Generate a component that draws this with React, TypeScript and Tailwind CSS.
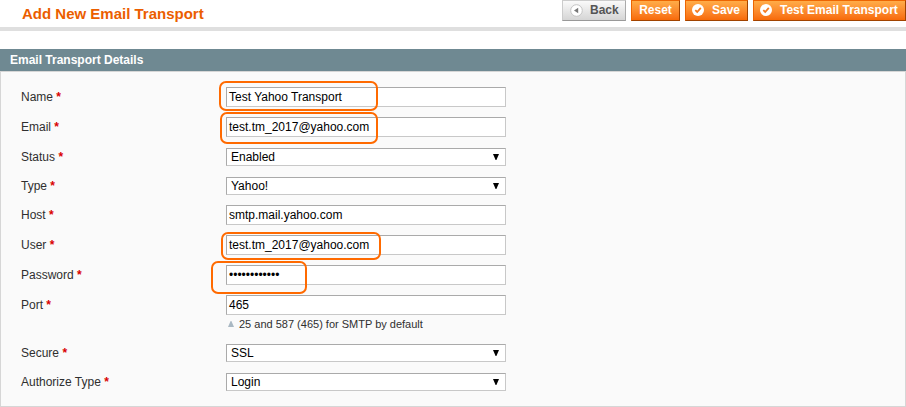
import React from 'react';

type Field = {
  label: string;
  value: string;
  kind: 'text' | 'select';
  row: string;
  highlight?: string;
  note?: string;
};

const fields: Field[] = [
  { label: 'Name', value: 'Test Yahoo Transport', kind: 'text', row: 'h-[30px]', highlight: '-left-[7px] -top-[6px] w-[159px] h-[30px]' },
  { label: 'Email', value: 'test.tm_2017@yahoo.com', kind: 'text', row: 'h-[30px]', highlight: '-left-[6px] -top-[5px] w-[158px] h-[32px]' },
  { label: 'Status', value: 'Enabled', kind: 'select', row: 'h-[29px]' },
  { label: 'Type', value: 'Yahoo!', kind: 'select', row: 'h-[29px]' },
  { label: 'Host', value: 'smtp.mail.yahoo.com', kind: 'text', row: 'h-[30px]' },
  { label: 'User', value: 'test.tm_2017@yahoo.com', kind: 'text', row: 'h-[30px]', highlight: '-left-[5px] -top-[3px] w-[160px] h-[28px]' },
  { label: 'Password', value: '••••••••••••', kind: 'text', row: 'h-[30px]', highlight: '-left-[15px] -top-[4px] w-[96px] h-[33px]' },
  { label: 'Port', value: '465', kind: 'text', row: 'h-12', note: '25 and 587 (465) for SMTP by default' },
  { label: 'Secure', value: 'SSL', kind: 'select', row: 'h-[29px]' },
  { label: 'Authorize Type', value: 'Login', kind: 'select', row: 'h-[29px]' },
];

const orange =
  'h-[21px] border border-t-[#ed6502] border-l-[#ed6502] border-r-[#a04300] border-b-[#a04300] bg-linear-to-b from-[#ffac47] to-[#f76a07] text-white';

function CheckIcon() {
  return (
    <svg width="12" height="12" viewBox="0 0 12 12" className="mb-px shrink-0">
      <circle cx="6" cy="6" r="6" fill="#fff" />
      <path d="M3.3 6.2 5.2 8 8.8 3.9" fill="none" stroke="#f47a20" strokeWidth="1.8" />
    </svg>
  );
}

function FieldRow({ label, value, kind, row, highlight, note }: Field) {
  return (
    <div className={`flex items-start ${row}`}>
      <div className="w-[205px] text-xs leading-5 text-[#2f2f2f]">
        {label} <span className="font-bold text-[#d90000]">*</span>
      </div>
      <div className="relative w-[280px]">
        {kind === 'text' ? (
          <div className="flex h-5 items-center border border-t-[#aaa] border-l-[#aaa] border-r-[#c8c8c8] border-b-[#c8c8c8] bg-white pl-0.5 text-xs text-black">
            {value}
          </div>
        ) : (
          <div className="mt-px flex h-[18px] items-center justify-between border border-t-[#aaa] border-l-[#aaa] border-r-[#c8c8c8] border-b-[#c8c8c8] bg-white pl-1 pr-1.5 text-xs text-black">
            {value}
            <svg width="6" height="6" viewBox="0 0 6 6" className="mb-px">
              <path d="M0 0h6L3.4 6h-.8z" fill="#000" />
            </svg>
          </div>
        )}
        {note && (
          <div className="flex h-[18px] items-center pl-0.5 text-[11px] text-[#2f2f2f]">
            <svg width="6" height="6" viewBox="0 0 6 6" className="mr-[5px]">
              <path d="M2.6 0h.8L6 6H0z" fill="#a9b8c3" />
            </svg>
            {note}
          </div>
        )}
        {highlight && (
          <div className={`absolute z-10 rounded-[7px] border-2 border-[#ff6a00] ${highlight}`} />
        )}
      </div>
    </div>
  );
}

export default function App() {
  return (
    <div className="h-[407px] w-[906px] overflow-hidden bg-white font-['Liberation_Sans',Arial,sans-serif]">
      <header className="flex h-[31px] items-start justify-between border-b-4 border-[#dfdfdf] pl-[22px]">
        <h1 className="pt-1 text-[15px] leading-5 font-bold text-[#eb5e00]">Add New Email Transport</h1>
        <div className="flex gap-[5px] text-xs leading-[19px] font-bold whitespace-nowrap">
          <button className="flex h-[21px] w-16 items-center border border-t-[#ccc] border-l-[#ccc] border-r-[#aaa] border-b-[#999] bg-linear-to-b from-[#fafafa] to-[#d5d5d5] pl-[7px] text-[#555]">
            <svg width="13" height="13" viewBox="0 0 13 13" className="mr-[7px] shrink-0">
              <circle cx="6.5" cy="6.5" r="5.8" fill="#fff" stroke="#c4c4c4" />
              <path d="M8.2 3.8v5.4L4 6.5z" fill="#777" />
            </svg>
            Back
          </button>
          <button className={`w-[49px] ${orange}`}>Reset</button>
          <button className={`flex w-[63px] items-center gap-2 pl-1.5 ${orange}`}>
            <CheckIcon />
            Save
          </button>
          <button className={`flex w-[153px] items-center gap-2 pl-1.5 ${orange}`}>
            <CheckIcon />
            Test Email Transport
          </button>
        </div>
      </header>
      <section className="mt-[18px]">
        <h2 className="h-[22px] bg-[#6f8992] pl-2.5 text-xs leading-[22px] font-bold text-white">
          Email Transport Details
        </h2>
        <div className="h-[336px] border border-[#d6d6d6] bg-[#fafafa] pt-[15px] pl-5">
          {fields.map((field) => (
            <FieldRow key={field.label} {...field} />
          ))}
        </div>
      </section>
    </div>
  );
}
